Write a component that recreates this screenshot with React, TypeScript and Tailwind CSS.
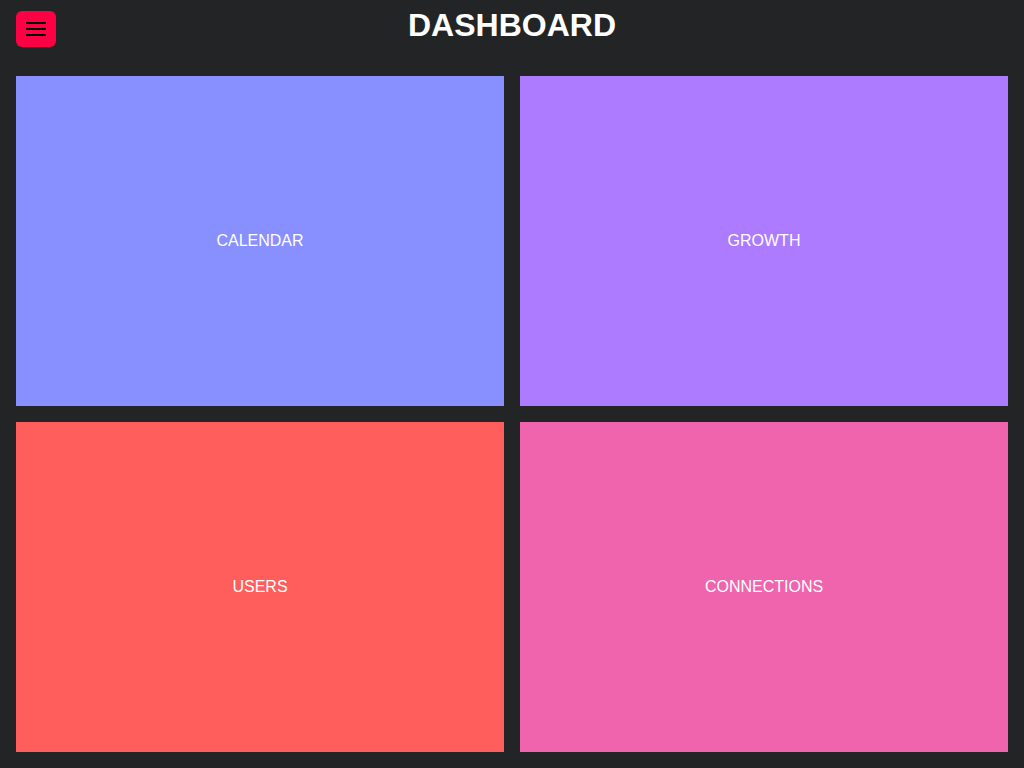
import React from "react";

const cards = [
  { label: "CALENDAR", color: "bg-[#888fff]" },
  { label: "GROWTH", color: "bg-[#ac7bff]" },
  { label: "USERS", color: "bg-[#ff5e5d]" },
  { label: "CONNECTIONS", color: "bg-[#f064ae]" },
];

export default function App() {
  return (
    <div className="min-h-screen h-[768px] flex flex-col bg-[#232425] font-['Liberation_Sans',Arial,sans-serif] text-white">
      {/* Header */}
      <header className="h-[60px] shrink-0 grid grid-cols-[1fr_auto_1fr] items-start px-4">
        <button className="mt-[11px] w-10 h-9 rounded-md bg-[#ff0044] flex flex-col items-center justify-center gap-1">
          <span className="block w-5 h-0.5 bg-black" />
          <span className="block w-5 h-0.5 bg-black" />
          <span className="block w-5 h-0.5 bg-black" />
        </button>
        <h1 className="mt-[1px] text-[32px] leading-normal font-bold">DASHBOARD</h1>
        <div />
      </header>

      {/* Tiles */}
      <main className="flex-1 grid grid-cols-2 grid-rows-2 gap-4 px-4 pt-4 pb-4">
        {cards.map((c) => (
          <div
            key={c.label}
            className={`${c.color} flex items-center justify-center text-base`}
          >
            {c.label}
          </div>
        ))}
      </main>
    </div>
  );
}
